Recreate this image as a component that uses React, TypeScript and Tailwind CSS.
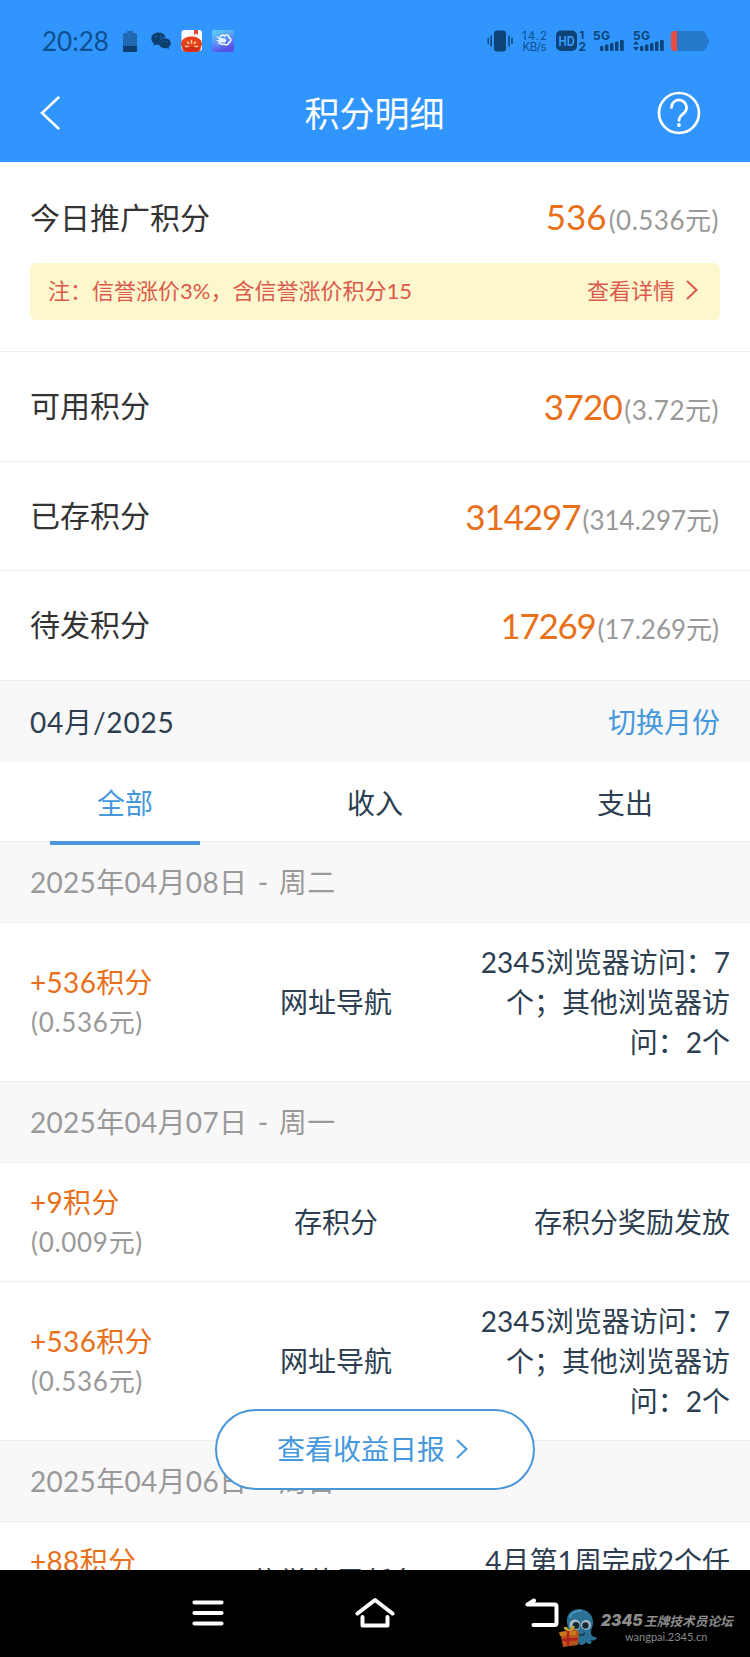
import { clsx } from "clsx";

interface Summary {
  label: string;
  points: string;
  yuan: string;
  tracking: string;
}

interface RecordItem {
  points: string;
  yuan: string;
  type: string;
  desc: string;
}

interface DayGroup {
  date: string;
  items: RecordItem[];
}

const summaries: Summary[] = [
  { label: "可用积分", points: "3720", yuan: "3.72", tracking: "tracking-[-0.7px]" },
  { label: "已存积分", points: "314297", yuan: "314.297", tracking: "tracking-[-1.1px]" },
  { label: "待发积分", points: "17269", yuan: "17.269", tracking: "tracking-[-1.3px]" },
];

const tabs = ["全部", "收入", "支出"];

const days: DayGroup[] = [
  {
    date: "2025年04月08日 - 周二",
    items: [
      { points: "536", yuan: "0.536", type: "网址导航", desc: "2345浏览器访问：7个；其他浏览器访问：2个" },
    ],
  },
  {
    date: "2025年04月07日 - 周一",
    items: [
      { points: "9", yuan: "0.009", type: "存积分", desc: "存积分奖励发放" },
      { points: "536", yuan: "0.536", type: "网址导航", desc: "2345浏览器访问：7个；其他浏览器访问：2个" },
    ],
  },
  {
    date: "2025年04月06日 - 周日",
    items: [
      { points: "88", yuan: "0.088", type: "信誉值周任务", desc: "4月第1周完成2个任务" },
    ],
  },
];

function Signal({ arrows = false }: { arrows?: boolean }) {
  return (
    <svg className="overflow-visible" width="32" height="22" viewBox="0 0 32 22" fill="#0d4377">
      <text x="0" y="9.500" fontSize="12" fontWeight="700" fontFamily="Inter, sans-serif" textLength="17">5G</text>
      <rect x="7" y="16" width="3.400" height="5" rx="1" />
      <rect x="12" y="14.500" width="3.400" height="6.500" rx="1" />
      <rect x="17" y="13" width="3.400" height="8" rx="1" />
      <rect x="22" y="11.500" width="3.400" height="9.500" rx="1" />
      <rect x="27" y="10" width="3.800" height="11" rx="1" />
      {arrows && <path d="M3 11 L6 14.500 H0 Z M3 21 L6 17 H0 Z" />}
    </svg>
  );
}

function StatusBar() {
  return (
    <div className="flex h-[82px] items-center justify-between pr-[41px] pl-[42px] text-[#0d4f8f]">
      <div className="flex items-center">
        <span className="w-[81px] text-[26px] leading-8">20:28</span>
        <svg width="14" height="21" viewBox="0 0 14 21">
          <path d="M4 0h6v2h2.500a1.500 1.500 0 0 1 1.500 1.500V14H0V3.500A1.500 1.500 0 0 1 1.500 2H4Z" fill="#2169b0" />
          <path d="M0 14.500h14v5a1.500 1.500 0 0 1-1.500 1.500h-11A1.500 1.500 0 0 1 0 19.500Z" fill="#0c3e74" />
        </svg>
        <svg className="ml-[14px]" width="20" height="18" viewBox="0 0 20 18" fill="#0c3e6e">
          <path d="M7.500 0.500C3.400 .5 .3 3 .3 6.600c0 2 1 3.700 2.700 4.900l-.6 2.300 2.700-1.300c1 .3 2 .4 3 .4C7.500 8.500 10 5.800 14.800 5.300 13.800 2.300 11 .5 7.500.5Z" />
          <path d="M13.800 6.200c-3.300 0-5.900 2.200-5.900 5s2.600 5 5.900 5c.8 0 1.500-.1 2.200-.3l2 1-.5-1.800c1.400-.9 2.200-2.300 2.200-3.900 0-2.800-2.600-5-5.900-5Z" />
          <g fill="#2468a8">
            <circle cx="5" cy="4.500" r=".9" />
            <circle cx="9.800" cy="4.500" r=".9" />
            <circle cx="12" cy="9.800" r=".8" />
            <circle cx="16" cy="9.800" r=".8" />
          </g>
        </svg>
        <svg className="ml-[10px]" width="22" height="22" viewBox="0 0 22 22">
          <rect x=".5" y="0" width="20.500" height="21" rx="3" fill="#fff" />
          <path d="M13 0h4v5l-2-1.500L13 5Z" fill="#e0492f" />
          <path d="M0 14C0 9 5 6.500 10.500 6.500S21 9 21 14c0 1-.5 2-1 2.500V17c0 3-2 5-5 5H6c-3 0-5-2-5-5v-.5C.5 16 0 15 0 14Z" fill="#e8401a" />
          <path d="M2 17h17c-1 3-3 4.500-5 4.500H7C5 21.500 3 20 2 17Z" fill="#d32a18" />
          <path d="M10.500 10.500v2.500M6.500 12l1.300 1.500M14.500 12l-1.300 1.500M4.500 16.500h2.500M16.500 16.500h-2.500" stroke="#ffd9a0" strokeWidth="1.500" strokeLinecap="round" />
        </svg>
        <svg className="ml-[9px]" width="22" height="22" viewBox="0 0 22 22">
          <defs>
            <linearGradient id="sky" x1="0" y1="0" x2=".4" y2="1">
              <stop offset="0" stopColor="#58d3f7" />
              <stop offset=".5" stopColor="#5b9bf6" />
              <stop offset="1" stopColor="#5750ea" />
            </linearGradient>
          </defs>
          <rect width="22" height="22" rx="2" fill="url(#sky)" />
          <path d="M8 7c1.500-2.500 4-2 4.500-1 2-2 4.500-1 4.500 1.500 2.500 1 2.500 4 0 5-.5 2.500-3.500 3-5 1.500-1.500 1-3.500.5-4-1" fill="none" stroke="#fff" strokeWidth="1.400" strokeLinecap="round" />
          <path d="M3.500 5.500 8 8l5 .5 1.500 2-1.500 2-4.500 0-4 2.500 2.500-3-3.500-1.500 4-.5Z" fill="#e8f4ff" />
        </svg>
      </div>

      <div className="flex items-center">
        <svg width="26" height="22" viewBox="0 0 26 22" fill="#0d4377">
          <rect x="7" y=".5" width="12" height="21" rx="3" />
          <path d="M4.200 6v10M1.200 8.500v5M22 6v10M25 8.500v5" stroke="#0d4377" strokeWidth="1.500" strokeLinecap="round" />
        </svg>
        <svg className="ml-[9px] overflow-visible" width="25" height="24" viewBox="0 0 25 24" fill="#0d4f8f" fontFamily="Inter, sans-serif" fontSize="11.500">
          <text x="0" y="10.500" textLength="25">14.2</text>
          <text x="0.500" y="22" textLength="24">KB/s</text>
        </svg>
        <svg className="ml-[9px] overflow-visible" width="30" height="22" viewBox="0 0 30 22" fill="#0d4377" fontFamily="Inter, sans-serif" fontWeight="700">
          <rect x="0" y=".5" width="21" height="20.500" rx="5" />
          <text x="2.500" y="15.500" fontSize="12.500" fill="#3a9bff" textLength="16" lengthAdjust="spacingAndGlyphs">HD</text>
          <text x="23.500" y="8.500" fontSize="11">1</text>
          <text x="22.500" y="21" fontSize="12">2</text>
        </svg>
        <div className="ml-[7px] flex gap-[8px]">
          <Signal />
          <Signal arrows />
        </div>
        <svg className="ml-[6px]" width="38" height="20" viewBox="0 0 38 20">
          <path d="M4 0h29l2.500 4c0 2 2.500 3 2.500 6s-2.500 4-2.500 6L33 20H4a4 4 0 0 1-4-4V4a4 4 0 0 1 4-4Z" fill="#2478ca" />
          <path d="M4 0h2v20H4a4 4 0 0 1-4-4V4a4 4 0 0 1 4-4Z" fill="#f04a3e" />
        </svg>
      </div>
    </div>
  );
}

function Amount({ points, yuan, tracking }: { points: string; yuan: string; tracking?: string }) {
  return (
    <div className="flex items-baseline pr-px text-[#e9701a]">
      <span className={clsx("text-[35px] leading-[48px]", tracking)}>{points}</span>
      <span className={clsx("ml-[2px] text-[26px] leading-[48px] text-[#999]", yuan.length > 5 ? "tracking-[0px]" : "tracking-[0.5px]")}>
        ({yuan}元)
      </span>
    </div>
  );
}

function RecordRow({ item }: { item: RecordItem }) {
  return (
    <div className="flex items-center border-b border-[#eee] py-[19px] pr-5 pl-[30px] leading-10 text-[#2c3e50]">
      <div className="w-[200px]">
        <div className="tracking-[0.3px] text-[#e9701a]">+{item.points}积分</div>
        <div className="pl-px text-[26px] tracking-[0.7px] text-[#999]">({item.yuan}元)</div>
      </div>
      <div className="w-[212px] text-center">{item.type}</div>
      <div className="ml-auto w-[260px] text-right">{item.desc}</div>
    </div>
  );
}

function Watermark() {
  return (
    <div className="absolute top-[38px] left-[558px] flex text-[#8b8b8b]">
      <svg width="40" height="42" viewBox="0 0 40 42">
        <path d="M9 15C8 6 14 1 21 1s14 5 14 13c0 5-2 7-2 11 0 3 4 5 6 4-1 4-4 4-6 3 2 4-2 6-5 2-2 4-7 4-8 0-4 4-8 1-7-4-2-5-3-10-4-15Z" fill="#2b7196" />
        <path d="M12 9c2-5 7-6 11-6" stroke="#4a93b5" strokeWidth="2" strokeLinecap="round" fill="none" />
        <circle cx="17" cy="17" r="5.500" fill="#a9bac4" />
        <circle cx="28" cy="17" r="5" fill="#a9bac4" />
        <circle cx="18" cy="17.500" r="3.500" fill="#122b3c" />
        <circle cx="27.500" cy="17.500" r="3.200" fill="#122b3c" />
        <path d="M20 26q4 3 7-1" stroke="#12384e" strokeWidth="1.500" fill="none" />
        <path d="M2 24l15-3 4 3-1 13-15 2Z" fill="#b4541c" />
        <path d="M1 24l17-1v4L2 28Z" fill="#c8791f" />
        <path d="M10 23v15M4 32l16-1" stroke="#b01f1a" strokeWidth="2.500" />
        <path d="M10 23c-5-1-6-5-1-4l2 3 3-4c4-1 4 4-2 5Z" fill="#c5a32a" />
      </svg>
      <div className="ml-[3px] flex flex-col pt-[3px]">
        <div className="flex items-baseline gap-px leading-5 font-bold italic">
          <span className="w-[42px] font-[Inter] text-[15.5px] font-black">2345</span>
          <span className="text-[12.7px] whitespace-nowrap">王牌技术员论坛</span>
        </div>
        <span className="-mt-[2px] ml-[24px] text-[11px] leading-[15px]">wangpai.2345.cn</span>
      </div>
    </div>
  );
}

function NavBar() {
  return (
    <nav className="absolute inset-x-0 bottom-0 h-[87px] bg-black">
      <div className="flex h-[85px] items-center justify-between pr-[191px] pl-[192px]">
        <svg width="32" height="28" viewBox="0 0 32 28" stroke="#fff" strokeWidth="4.200" strokeLinecap="round">
          <path d="M2.500 3.500h27M2.500 14h27M2.500 24.500h27" />
        </svg>
        <svg width="40" height="32" viewBox="0 0 40 32" fill="none" stroke="#fff" strokeWidth="4" strokeLinecap="round" strokeLinejoin="round">
          <path d="M2.500 16.500 20 3l17.500 13.500" />
          <path d="M7.500 20v8.500h25V20" />
        </svg>
        <svg width="34" height="30" viewBox="0 0 34 30" fill="none" stroke="#fff" strokeWidth="4" strokeLinecap="round" strokeLinejoin="round">
          <path d="M9 2.500 2.500 6.500H29.500q2 0 2 2V25q0 2-2 2H8.500" />
        </svg>
      </div>
      <Watermark />
    </nav>
  );
}

export default function App() {
  return (
    <main className="relative h-[1657px] w-[750px] overflow-hidden bg-white font-[Lato,'Noto_Sans_CJK_SC',sans-serif] text-[28px] text-[#2c3e50]">
      <header className="h-[162px] bg-[#3096fd]">
        <StatusBar />
        <div className="flex h-[61px] items-center justify-between pr-[49px] pl-[40px] text-white">
          <svg width="20" height="34" viewBox="0 0 20 34" fill="none" stroke="currentColor" strokeWidth="2.500" strokeLinecap="round">
            <path d="M18.500 1.500 2 17l16.500 15.500" />
          </svg>
          <h1 className="ml-[32px] text-[35px] leading-[50px]">积分明细</h1>
          <svg width="44" height="44" viewBox="0 0 44 44" fill="none" stroke="currentColor" strokeWidth="2.700">
            <circle cx="22" cy="22" r="20" />
            <path d="M14.500 16.500a7.500 7.500 0 1 1 13 5c-3 3-5.500 3.500-5.500 8" strokeLinecap="round" />
            <circle cx="22" cy="34" r="1.900" fill="currentColor" stroke="none" />
          </svg>
        </div>
      </header>

      {/* Today */}
      <section className="h-[190px] border-b border-[#eee] px-[30px] pt-[30px]">
        <div className="flex items-center justify-between text-[30px] text-[#333]">
          <span className="pb-[2px] leading-[48px]">今日推广积分</span>
          <Amount points="536" yuan="0.536" />
        </div>
        <div className="mt-[19px] flex h-[57px] items-center justify-between rounded-md bg-[#fdf7ce] pr-[21px] pb-[3px] pl-[18px] text-[22px] text-[#dc5a4b]">
          <span>注：信誉涨价3%，含信誉涨价积分15</span>
          <span className="flex items-center gap-[10px]">
            查看详情
            <svg width="14" height="20" viewBox="0 0 14 20" fill="none" stroke="currentColor" strokeWidth="2">
              <path d="M2 1l9.500 9L2 19" />
            </svg>
          </span>
        </div>
      </section>

      {summaries.map((s) => (
        <section key={s.label} className="flex h-[109.500px] items-center justify-between border-b border-[#eee] px-[30px] text-[30px] text-[#333]">
          <span className="pb-px">{s.label}</span>
          <div className="pt-[4px]">
            <Amount points={s.points} yuan={s.yuan} tracking={s.tracking} />
          </div>
        </section>
      ))}

      <div className="flex h-[82px] items-center justify-between bg-[#f8f8f8] px-[30px]">
        <span className="tracking-[0.8px]">04月/2025</span>
        <button className="text-[#4698dc]">切换月份</button>
      </div>

      <div className="flex h-[79px] border-b border-[#eee]">
        {tabs.map((tab, i) => (
          <button key={tab} className={clsx("relative flex-1 pt-[2px]", i === 0 && "text-[#4698dc]")}>
            {tab}
            {i === 0 && <span className="absolute -bottom-[4px] left-[50px] h-[4px] w-[150px] bg-[#4a96d8]" />}
          </button>
        ))}
      </div>

      {days.map((day) => (
        <section key={day.date}>
          <div className="flex h-[81px] items-center border-b border-[#eee] bg-[#f8f8f8] px-[30px] tracking-[0.3px] text-[#999] [word-spacing:3px]">
            {day.date}
          </div>
          {day.items.map((item, i) => (
            <RecordRow key={i} item={item} />
          ))}
        </section>
      ))}

      <button className="absolute top-[1409px] left-[215px] flex h-[81px] w-[320px] items-center justify-center gap-[10px] rounded-full border-2 border-[#4a96d8] bg-white pr-[4px] pb-[2px] text-[#4698dc]">
        查看收益日报
        <svg width="14" height="20" viewBox="0 0 14 20" fill="none" stroke="currentColor" strokeWidth="2">
          <path d="M2 1l9.500 9L2 19" />
        </svg>
      </button>

      <NavBar />
    </main>
  );
}
